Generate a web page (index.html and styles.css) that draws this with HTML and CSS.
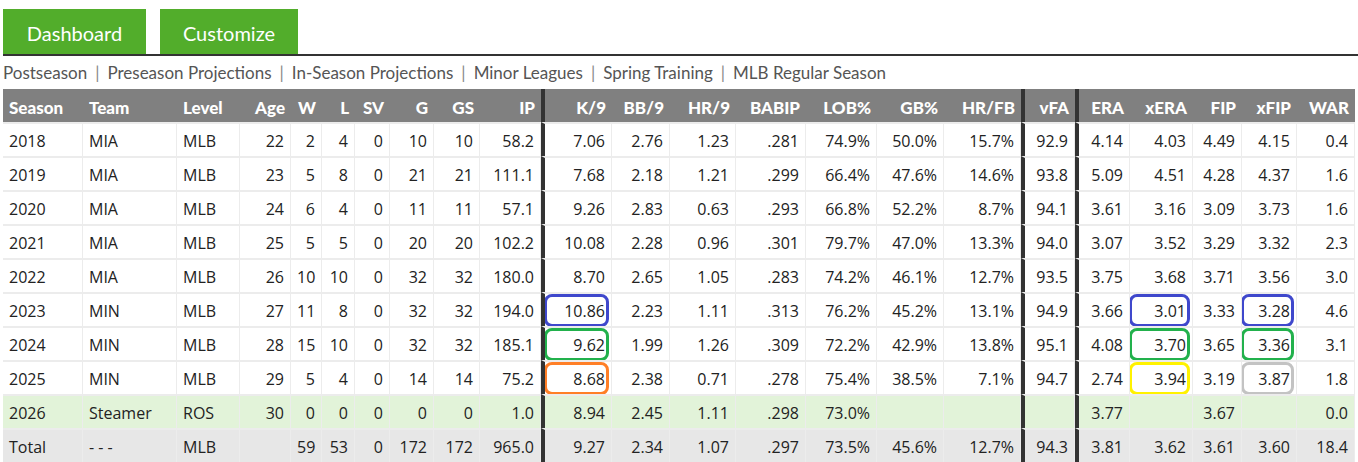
FILE: index.html
```html
<!DOCTYPE html>
<html>
<head>
<meta charset="utf-8">
<link rel="stylesheet" href="styles.css">
</head>
<body>
<div class="page">
  <div class="tabs">
    <a class="tab tab-dash">Dashboard</a>
    <a class="tab tab-cust">Customize</a>
  </div>
  <div class="subnav">
    <a>Postseason</a><span class="sep">|</span><a>Preseason Projections</a><span class="sep">|</span><a>In-Season Projections</a><span class="sep">|</span><a>Minor Leagues</a><span class="sep">|</span><a>Spring Training</a><span class="sep">|</span><a>MLB Regular Season</a>
  </div>
  <table class="stats">
    <colgroup>
      <col class="c-season"><col class="c-team"><col class="c-level"><col class="c-age"><col class="c-w"><col class="c-l"><col class="c-sv"><col class="c-g"><col class="c-gs"><col class="c-ip">
      <col class="c-k9"><col class="c-bb9"><col class="c-hr9"><col class="c-babip"><col class="c-lob"><col class="c-gb"><col class="c-hrfb">
      <col class="c-vfa"><col class="c-era"><col class="c-xera"><col class="c-fip"><col class="c-xfip"><col class="c-war">
    </colgroup>
    <thead>
      <tr>
        <th class="l">Season</th><th class="l">Team</th><th class="l">Level</th><th>Age</th><th>W</th><th>L</th><th>SV</th><th>G</th><th>GS</th><th>IP</th>
        <th class="thick">K/9</th><th>BB/9</th><th>HR/9</th><th>BABIP</th><th>LOB%</th><th>GB%</th><th>HR/FB</th>
        <th class="thick">vFA</th><th class="thick">ERA</th><th>xERA</th><th>FIP</th><th>xFIP</th><th>WAR</th>
      </tr>
    </thead>
    <tbody>
      <tr>
        <td class="l">2018</td><td class="l">MIA</td><td class="l">MLB</td><td>22</td><td>2</td><td>4</td><td>0</td><td>10</td><td>10</td><td>58.2</td>
        <td class="thick">7.06</td><td>2.76</td><td>1.23</td><td>.281</td><td>74.9%</td><td>50.0%</td><td>15.7%</td>
        <td class="thick">92.9</td><td class="thick">4.14</td><td>4.03</td><td>4.49</td><td>4.15</td><td>0.4</td>
      </tr>
      <tr>
        <td class="l">2019</td><td class="l">MIA</td><td class="l">MLB</td><td>23</td><td>5</td><td>8</td><td>0</td><td>21</td><td>21</td><td>111.1</td>
        <td class="thick">7.68</td><td>2.18</td><td>1.21</td><td>.299</td><td>66.4%</td><td>47.6%</td><td>14.6%</td>
        <td class="thick">93.8</td><td class="thick">5.09</td><td>4.51</td><td>4.28</td><td>4.37</td><td>1.6</td>
      </tr>
      <tr>
        <td class="l">2020</td><td class="l">MIA</td><td class="l">MLB</td><td>24</td><td>6</td><td>4</td><td>0</td><td>11</td><td>11</td><td>57.1</td>
        <td class="thick">9.26</td><td>2.83</td><td>0.63</td><td>.293</td><td>66.8%</td><td>52.2%</td><td>8.7%</td>
        <td class="thick">94.1</td><td class="thick">3.61</td><td>3.16</td><td>3.09</td><td>3.73</td><td>1.6</td>
      </tr>
      <tr>
        <td class="l">2021</td><td class="l">MIA</td><td class="l">MLB</td><td>25</td><td>5</td><td>5</td><td>0</td><td>20</td><td>20</td><td>102.2</td>
        <td class="thick">10.08</td><td>2.28</td><td>0.96</td><td>.301</td><td>79.7%</td><td>47.0%</td><td>13.3%</td>
        <td class="thick">94.0</td><td class="thick">3.07</td><td>3.52</td><td>3.29</td><td>3.32</td><td>2.3</td>
      </tr>
      <tr>
        <td class="l">2022</td><td class="l">MIA</td><td class="l">MLB</td><td>26</td><td>10</td><td>10</td><td>0</td><td>32</td><td>32</td><td>180.0</td>
        <td class="thick">8.70</td><td>2.65</td><td>1.05</td><td>.283</td><td>74.2%</td><td>46.1%</td><td>12.7%</td>
        <td class="thick">93.5</td><td class="thick">3.75</td><td>3.68</td><td>3.71</td><td>3.56</td><td>3.0</td>
      </tr>
      <tr>
        <td class="l">2023</td><td class="l">MIN</td><td class="l">MLB</td><td>27</td><td>11</td><td>8</td><td>0</td><td>32</td><td>32</td><td>194.0</td>
        <td class="thick hl hl-blue">10.86</td><td>2.23</td><td>1.11</td><td>.313</td><td>76.2%</td><td>45.2%</td><td>13.1%</td>
        <td class="thick">94.9</td><td class="thick">3.66</td><td class="hl hl-blue">3.01</td><td>3.33</td><td class="hl hl-blue">3.28</td><td>4.6</td>
      </tr>
      <tr>
        <td class="l">2024</td><td class="l">MIN</td><td class="l">MLB</td><td>28</td><td>15</td><td>10</td><td>0</td><td>32</td><td>32</td><td>185.1</td>
        <td class="thick hl hl-green">9.62</td><td>1.99</td><td>1.26</td><td>.309</td><td>72.2%</td><td>42.9%</td><td>13.8%</td>
        <td class="thick">95.1</td><td class="thick">4.08</td><td class="hl hl-green">3.70</td><td>3.65</td><td class="hl hl-green">3.36</td><td>3.1</td>
      </tr>
      <tr>
        <td class="l">2025</td><td class="l">MIN</td><td class="l">MLB</td><td>29</td><td>5</td><td>4</td><td>0</td><td>14</td><td>14</td><td>75.2</td>
        <td class="thick hl hl-orange">8.68</td><td>2.38</td><td>0.71</td><td>.278</td><td>75.4%</td><td>38.5%</td><td>7.1%</td>
        <td class="thick">94.7</td><td class="thick">2.74</td><td class="hl hl-yellow">3.94</td><td>3.19</td><td class="hl hl-gray">3.87</td><td>1.8</td>
      </tr>
      <tr class="proj">
        <td class="l">2026</td><td class="l">Steamer</td><td class="l">ROS</td><td>30</td><td>0</td><td>0</td><td>0</td><td>0</td><td>0</td><td>1.0</td>
        <td class="thick">8.94</td><td>2.45</td><td>1.11</td><td>.298</td><td>73.0%</td><td></td><td></td>
        <td class="thick"></td><td class="thick">3.77</td><td></td><td>3.67</td><td></td><td>0.0</td>
      </tr>
      <tr class="total">
        <td class="l">Total</td><td class="l">- - -</td><td class="l">MLB</td><td></td><td>59</td><td>53</td><td>0</td><td>172</td><td>172</td><td>965.0</td>
        <td class="thick">9.27</td><td>2.34</td><td>1.07</td><td>.297</td><td>73.5%</td><td>45.6%</td><td>12.7%</td>
        <td class="thick">94.3</td><td class="thick">3.81</td><td>3.62</td><td>3.61</td><td>3.60</td><td>18.4</td>
      </tr>
    </tbody>
  </table>
</div>
</body>
</html>
```

FILE: styles.css
```css
html, body {
  margin: 0;
  padding: 0;
  background: #ffffff;
}

.page {
  padding-left: 3px;
  font-family: "Open Sans", "Noto Sans", sans-serif;
  color: #222;
}

.tabs {
  display: flex;
  gap: 14px;
  padding-top: 9px;
  border-bottom: 2px solid #333;
}

.tab {
  display: flex;
  align-items: center;
  justify-content: center;
  box-sizing: border-box;
  height: 45px;
  padding-top: 3px;
  background: #52ad2b;
  color: #fff;
  font-family: Lato, sans-serif;
  font-size: 20px;
}

.tab-dash { width: 143px; }
.tab-cust { width: 138px; }

.subnav {
  height: 33px;
  display: flex;
  align-items: center;
  font-family: Lato, sans-serif;
  font-size: 17px;
  color: #555;
}

.subnav .sep {
  color: #888;
  padding: 0 8px;
}

.stats {
  table-layout: fixed;
  width: 1352px;
  border-collapse: separate;
  border-spacing: 0;
  font-size: 16px;
}

.c-season { width: 80px; }
.c-team { width: 94px; }
.c-level { width: 63px; }
.c-age { width: 51px; }
.c-w { width: 31px; }
.c-l { width: 33px; }
.c-sv { width: 35px; }
.c-g { width: 44px; }
.c-gs { width: 46px; }
.c-ip { width: 61px; }
.c-k9 { width: 71px; }
.c-bb9 { width: 58px; }
.c-hr9 { width: 66px; }
.c-babip { width: 70px; }
.c-lob { width: 71px; }
.c-gb { width: 67px; }
.c-hrfb { width: 77px; }
.c-vfa { width: 54px; }
.c-era { width: 55px; }
.c-xera { width: 63px; }
.c-fip { width: 49px; }
.c-xfip { width: 55px; }
.c-war { width: 58px; }

.stats th,
.stats td {
  box-sizing: border-box;
  padding: 0 6px;
  text-align: right;
  white-space: nowrap;
  overflow: hidden;
}

.stats th {
  height: 33px;
  padding-top: 3px;
  background: #808080;
  color: #fff;
  font-family: Lato, sans-serif;
  font-weight: 900;
  font-size: 17px;
}

.stats td {
  height: 34px;
  padding-top: 1px;
  border-top: 2px solid #ececec;
  border-right: 1px solid #ececec;
  color: #222;
}

.stats .l {
  text-align: left;
}

.stats th.thick,
.stats td.thick {
  border-left: 4px solid #333;
}

.stats tr.proj td {
  background: #e2f3d9;
}

.stats tr.total td {
  background: #e7e7e7;
}

.stats td.hl {
  position: relative;
}

.stats td.hl::after {
  content: "";
  position: absolute;
  top: 0;
  bottom: -1px;
  left: -1px;
  right: 2px;
  border: 3px solid;
  border-radius: 8px;
}

.hl-blue::after { border-color: #3f48cc !important; }
.hl-green::after { border-color: #22b14c !important; }
.hl-orange::after { border-color: #ff7f27 !important; }
.hl-yellow::after { border-color: #fff200 !important; }
.hl-gray::after { border-color: #c3c3c3 !important; }
```
